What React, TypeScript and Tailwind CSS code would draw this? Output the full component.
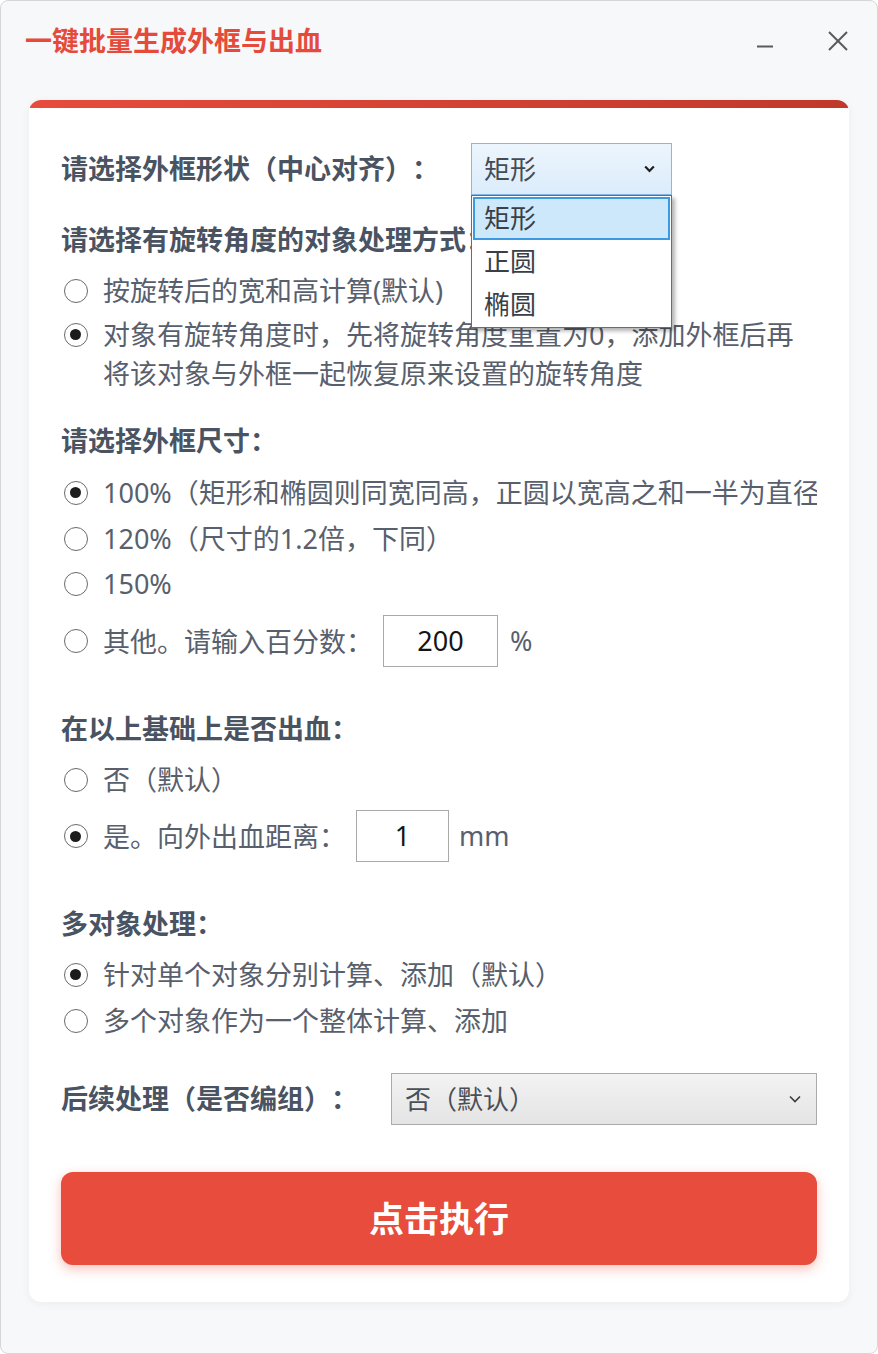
import React from "react";

const FONT = '"Noto Sans","Noto Sans CJK SC",sans-serif';

function Radio({ checked }: { checked?: boolean }) {
  return (
    <div className="w-[24px] h-[24px] shrink-0 rounded-full border-[1.5px] border-[#6a6a6a] bg-white flex items-center justify-center">
      {checked && <div className="w-[11px] h-[11px] rounded-full bg-[#1c1c1c]" />}
    </div>
  );
}

function RadioRow({
  checked,
  children,
  className = "",
  clip,
}: {
  checked?: boolean;
  children: React.ReactNode;
  className?: string;
  clip?: boolean;
}) {
  return (
    <div className={`flex items-start ${className}`}>
      <div className="mt-[7.5px] ml-[2.5px] mr-[15.5px]">
        <Radio checked={checked} />
      </div>
      <div
        className={`flex-1 min-w-0 text-[27px] leading-[39px] text-[#58606d] ${
          clip ? "whitespace-nowrap overflow-hidden" : ""
        }`}
      >
        {children}
      </div>
    </div>
  );
}

function Heading({ children, className = "" }: { children: React.ReactNode; className?: string }) {
  return (
    <div className={`h-[40px] text-[27px] leading-[40px] font-bold text-[#4a5361] whitespace-nowrap ${className}`}>
      {children}
    </div>
  );
}

export default function App() {
  return (
    <div
      className="w-[878px] h-[1354px] bg-[#f7f8fa] border border-[#d6d6d6] rounded-[8px] overflow-hidden flex flex-col [text-spacing-trim:space-all]"
      style={{ fontFamily: FONT }}
    >
      {/* title bar */}
      <div className="h-[79px] shrink-0 flex items-center pl-[24px] pr-[29px]">
        <div className="text-[27px] font-bold text-[#e54b3b] leading-none">一键批量生成外框与出血</div>
        <div className="flex-1" />
        <svg width="16" height="20" viewBox="0 0 16 20" className="mr-[55px]">
          <line x1="0" y1="15.5" x2="16" y2="15.5" stroke="#5a5a5a" strokeWidth="2" />
        </svg>
        <svg width="20" height="20" viewBox="0 0 20 20">
          <line x1="1" y1="1" x2="19" y2="19" stroke="#5a5a5a" strokeWidth="2" />
          <line x1="19" y1="1" x2="1" y2="19" stroke="#5a5a5a" strokeWidth="2" />
        </svg>
      </div>

      {/* card */}
      <div className="mt-[20px] mx-[28px] bg-white rounded-[12px] overflow-hidden shadow-[0_2px_10px_rgba(0,0,0,0.05)]">
        <div className="h-[8px] bg-gradient-to-r from-[#e74c3c] to-[#c0392b]" />
        <div className="px-[32px] pt-[35px] pb-[37px] flex flex-col">
          {/* row 1 */}
          <div className="h-[52px] flex items-center">
            <div className="text-[27px] font-bold text-[#4a5361] leading-[40px] whitespace-nowrap">
              请选择外框形状（中心对齐）：
            </div>
            <div className="relative ml-[32px] w-[201px] h-[52px] z-10">
              <div className="w-full h-full border border-[#86b9e8] bg-gradient-to-b from-[#ecf5fd] to-[#dcecfb] flex items-center pl-[12px] pr-[16px]">
                <span className="flex-1 text-[26px] text-[#454b55] leading-none">矩形</span>
                <svg width="11" height="8" viewBox="0 0 11 8">
                  <path d="M1.2 1.5 L5.5 6 L9.8 1.5" fill="none" stroke="#1e1e1e" strokeWidth="2.2" />
                </svg>
              </div>
              <div className="absolute top-full left-0 w-[201px] h-[133px] border border-[#6c6c6c] bg-white shadow-[3px_3px_4px_rgba(0,0,0,0.3)] pt-[1px] px-[1px]">
                <div className="h-[43px] border-2 border-[#3b9ae1] bg-[#cde8fa] flex items-center pl-[9px] text-[26px] text-[#3a3f47]">
                  矩形
                </div>
                <div className="h-[43px] flex items-center pl-[11px] text-[26px] text-[#3a3f47]">正圆</div>
                <div className="h-[43px] flex items-center pl-[11px] text-[26px] text-[#3a3f47]">椭圆</div>
              </div>
            </div>
          </div>

          <Heading className="mt-[25px]">请选择有旋转角度的对象处理方式：</Heading>
          <RadioRow className="mt-[11px]">按旋转后的宽和高计算(默认)</RadioRow>
          <RadioRow className="mt-[5px]" checked>
            对象有旋转角度时，先将旋转角度重置为0，添加外框后再将该对象与外框一起恢复原来设置的旋转角度
          </RadioRow>

          <Heading className="mt-[28px]">请选择外框尺寸：</Heading>
          <RadioRow className="mt-[12px]" checked clip>
            100%（矩形和椭圆则同宽同高，正圆以宽高之和一半为直径）
          </RadioRow>
          <RadioRow className="mt-[7px]">120%（尺寸的1.2倍，下同）</RadioRow>
          <RadioRow className="mt-[6px]">150%</RadioRow>
          <div className="mt-[12px] h-[52px] flex items-center">
            <div className="ml-[2.5px] mr-[15.5px]">
              <Radio />
            </div>
            <span className="text-[27px] leading-[39px] text-[#58606d] whitespace-nowrap">其他。请输入百分数：</span>
            <div className="ml-[10px] w-[115px] h-[52px] border-[1.5px] border-[#a9a9a9] flex items-center justify-center text-[27px] text-[#151515]">
              200
            </div>
            <span className="ml-[12px] text-[27px] text-[#58606d]">%</span>
          </div>

          <Heading className="mt-[42px]">在以上基础上是否出血：</Heading>
          <RadioRow className="mt-[11px]">否（默认）</RadioRow>
          <div className="mt-[11px] h-[52px] flex items-center">
            <div className="ml-[2.5px] mr-[15.5px]">
              <Radio checked />
            </div>
            <span className="text-[27px] leading-[39px] text-[#58606d] whitespace-nowrap">是。向外出血距离：</span>
            <div className="ml-[10px] w-[93px] h-[52px] border-[1.5px] border-[#a9a9a9] flex items-center justify-center text-[27px] text-[#151515]">
              1
            </div>
            <span className="ml-[10px] text-[27px] text-[#58606d]">mm</span>
          </div>

          <Heading className="mt-[42px]">多对象处理：</Heading>
          <RadioRow className="mt-[11px]" checked>
            针对单个对象分别计算、添加（默认）
          </RadioRow>
          <RadioRow className="mt-[7px]">多个对象作为一个整体计算、添加</RadioRow>

          <div className="mt-[33px] h-[52px] flex items-center">
            <div className="text-[27px] font-bold text-[#4a5361] leading-[40px] whitespace-nowrap">
              后续处理（是否编组）：
            </div>
            <div className="ml-[33px] flex-1 h-[52px] border-[1.5px] border-[#ababab] bg-gradient-to-b from-[#f3f3f3] to-[#e4e4e4] flex items-center pl-[13px] pr-[15px]">
              <span className="flex-1 text-[26px] text-[#4a4f57] leading-none">否（默认）</span>
              <svg width="12" height="8" viewBox="0 0 12 8">
                <path d="M1 1.5 L6 6.5 L11 1.5" fill="none" stroke="#3c3c3c" strokeWidth="1.6" />
              </svg>
            </div>
          </div>

          <div className="mt-[47px] h-[93px] rounded-[12px] bg-[#e74c3c] shadow-[0_4px_12px_rgba(231,76,60,0.35)] flex items-center justify-center">
            <span className="text-[35px] font-bold text-white leading-none">点击执行</span>
          </div>
        </div>
      </div>
    </div>
  );
}
